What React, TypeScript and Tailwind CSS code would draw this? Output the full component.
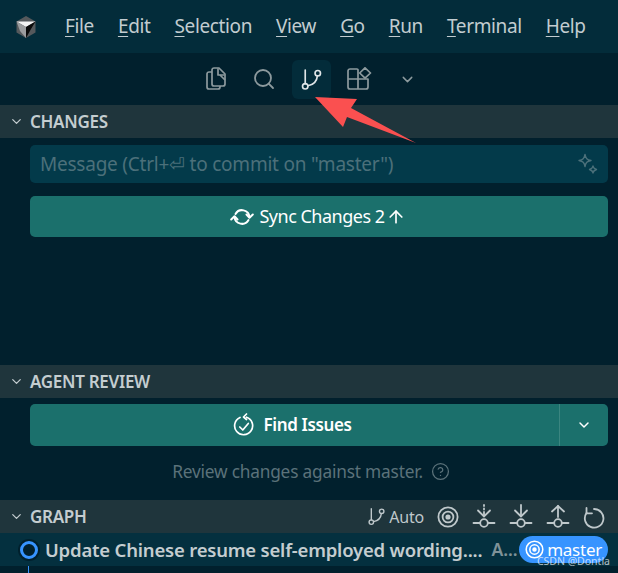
import React from 'react';
import { ChevronDown, Search, ArrowUp, CircleHelp } from 'lucide-react';

function BranchIcon({ size = 22, className = '' }: { size?: number; className?: string }) {
  return (
    <svg width={size} height={size} viewBox="0 0 22 22" fill="none" stroke="currentColor" strokeWidth="1.6" strokeLinecap="round" className={className}>
      <path d="M5 2v13" />
      <circle cx="5" cy="17.500" r="2.600" />
      <circle cx="17" cy="5" r="2.600" />
      <path d="M16.600 7.700c-.5 5-4.300 8.400-9 9.300" />
    </svg>
  );
}

function Target({ size = 22, className = '' }: { size?: number; className?: string }) {
  return (
    <svg width={size} height={size} viewBox="0 0 22 22" fill="none" stroke="currentColor" strokeWidth="1.800" className={className}>
      <circle cx="11" cy="11" r="9.600" />
      <circle cx="11" cy="11" r="5.400" />
      <circle cx="11" cy="11" r="1.700" fill="currentColor" />
    </svg>
  );
}

function Pull({ kind }: { kind: 'fetch' | 'pull' | 'push' }) {
  return (
    <svg width="24" height="26" viewBox="0 0 24 26" fill="none" stroke="currentColor" strokeWidth="1.800" strokeLinecap="round">
      {kind === 'fetch' && <path d="M12 1v1M12 4.500v1M12 8v3" />}
      {kind === 'pull' && <path d="M12 1v11" />}
      {kind === 'push' && <path d="M12 2v11" />}
      {kind === 'push' ? <path d="M6 7.500 12 2l6 5.500" /> : <path d="M6 6.500l6 6 6-6" />}
      <circle cx="12" cy="19" r="3.800" />
      <path d="M1.500 19h6.700M15.800 19h6.700" />
    </svg>
  );
}

function Section({ title, right }: { title: string; right?: React.ReactNode }) {
  return (
    <div className="flex h-[33px] shrink-0 items-center bg-[#1f353c] pl-[9px] pr-[13px] text-[#c4cdd0]">
      <ChevronDown size={15} strokeWidth={2} />
      <span className="ml-[6px] text-[17px] font-semibold tracking-[-0.3px]">{title}</span>
      {right}
    </div>
  );
}

export default function App() {
  const menus = ['File', 'Edit', 'Selection', 'View', 'Go', 'Run', 'Terminal', 'Help'];

  return (
    <div className="relative flex h-[573px] w-[618px] flex-col overflow-hidden bg-[#01202d] font-['Noto_Sans','Open_Sans',sans-serif]">
      {/* title bar */}
      <div className="flex h-[53px] shrink-0 items-center bg-[#032c3a] pl-[16px] text-[19px] text-[#c2ccd0]">
        <svg width="20" height="22" viewBox="0 0 20 22" className="mr-[29px]">
          <path d="M10 0 19.500 5.500V16.500L10 22 .5 16.500V5.500Z" fill="#55595c" />
          <path d="M.5 5.500 19.500 5.500 10 11Z" fill="#f4f4f4" />
          <path d="M19.500 5.500 10 11V22L15 13Z" fill="#0a0a0a" />
          <path d="M.5 5.500 10 11 10 22 4 15Z" fill="#9b9d9f" />
        </svg>
        <div className="flex gap-[24px]">
          {menus.map((m) => (
            <span key={m} className="tracking-[-0.37px]">
              <span className="underline underline-offset-[3px]">{m[0]}</span>
              {m.slice(1)}
            </span>
          ))}
        </div>
      </div>

      {/* activity toolbar */}
      <div className="flex h-[52px] shrink-0 items-center justify-center bg-[#01202d] text-[#8d9a9e]">
        <div className="ml-[5px] flex items-center gap-[9px]">
          <div className="flex h-[39px] w-[39px] items-center justify-center">
            <svg width="20" height="24" viewBox="0 0 20 24" fill="none" stroke="currentColor" strokeWidth="1.700" strokeLinejoin="round">
              <path d="M6 5H3a2 2 0 0 0-2 2v13a2 2 0 0 0 2 2h9a2 2 0 0 0 2-2v-1" />
              <path d="M6 3a2 2 0 0 1 2-2h5l6 6v10a2 2 0 0 1-2 2H8a2 2 0 0 1-2-2Z" />
              <path d="M12 1.500 V8h6.500" />
              <path d="M14 8l5 5" />
            </svg>
          </div>
          <div className="flex h-[39px] w-[39px] items-center justify-center">
            <Search size={24} strokeWidth={1.800} />
          </div>
          <div className="flex h-[39px] w-[39px] items-center justify-center rounded-[6px] bg-[#032c3a] text-[#dfe5e7]">
            <BranchIcon size={23} />
          </div>
          <div className="flex h-[39px] w-[39px] items-center justify-center">
            <svg width="25" height="24" viewBox="0 0 25 24" fill="none" stroke="currentColor" strokeWidth="1.700" strokeLinejoin="round">
              <path d="M11 12V3a1 1 0 0 0-1-1H3a2 2 0 0 0-2 2v16a2 2 0 0 0 2 2h16a2 2 0 0 0 2-2v-8Z" />
              <path d="M11 12v10M1 12h10" />
              <path d="M18 .8 23.500 6 18 11.200 12.700 6Z" />
            </svg>
          </div>
          <div className="flex h-[39px] w-[39px] items-center justify-center">
            <ChevronDown size={17} strokeWidth={2} />
          </div>
        </div>
      </div>

      <Section title="CHANGES" />

      <div className="flex h-[227px] shrink-0 flex-col gap-[13px] pl-[30px] pr-[10px] pt-[7px]">
        <div className="flex h-[38px] items-center justify-between rounded-[5px] bg-[#033a4a] pl-[10px] pr-[9px] text-[19px] text-[#4c707a]">
          <span className="tracking-[-0.23px]">Message (Ctrl+⏎ to commit on "master")</span>
          <svg width="24" height="24" viewBox="0 0 24 24" fill="none" stroke="currentColor" strokeWidth="1.400" strokeLinejoin="round">
            <path d="M10 2.500c.8 4 2 5.200 6 6-4 .8-5.200 2-6 6-.8-4-2-5.200-6-6 4-.8 5.200-2 6-6Z" />
            <path d="M18 14c.3 2 1 2.700 3.500 3.500-2.500.8-3.200 1.500-3.500 3.500-.3-2-1-2.700-3.500-3.500 2.500-.8 3.200-1.500 3.500-3.500Z" />
          </svg>
        </div>
        <div className="flex h-[41px] items-center justify-center gap-[5px] rounded-[5px] bg-[#1b706c] pr-[2px] text-[18px] text-white">
          <svg width="24" height="24" viewBox="0 0 24 24" fill="none" stroke="currentColor" strokeWidth="2" strokeLinecap="round" strokeLinejoin="round">
            <path d="M5.500 9a7.500 7.500 0 0 1 14 3" />
            <path d="M16.500 9.500l3 3.200 3.300-3.200" />
            <path d="M18.500 15a7.500 7.500 0 0 1-14-3" />
            <path d="M1.200 14.500l3.300-3.200 3 3.200" />
          </svg>
          <span className="tracking-[-0.5px]">Sync Changes 2</span>
          <ArrowUp size={20} strokeWidth={2} className="ml-[-4px]" />
        </div>
      </div>

      <Section title="AGENT REVIEW" />

      <div className="flex h-[102px] shrink-0 flex-col items-stretch pl-[30px] pr-[10px] pt-[6px]">
        <div className="flex h-[42px] shrink-0 rounded-[5px] bg-[#1b706c] text-white">
          <div className="flex flex-1 items-center justify-center gap-[8px] border-r border-[#3b8580] text-[17px] font-semibold">
            <svg width="22" height="24" viewBox="0 0 22 24" fill="none" stroke="currentColor" strokeWidth="1.700" strokeLinecap="round" strokeLinejoin="round">
              <path d="M7 4.500a9 9 0 1 0 6.500-.3" />
              <path d="M13.500 1 10.500 4l3 2.500" />
              <path d="M6.800 14l3 3 5.500-6.500" />
            </svg>
            <span className="mr-[4px] tracking-[-0.35px]">Find Issues</span>
          </div>
          <div className="flex w-[48px] items-center justify-center">
            <ChevronDown size={16} strokeWidth={2.200} />
          </div>
        </div>
        <div className="mt-[13px] flex items-center justify-center gap-[8px] pr-[16px] text-[17.300px] text-[#5b727a]">
          <span className="tracking-[-0.2px]">Review changes against master.</span>
          <CircleHelp size={19} strokeWidth={1.600} />
        </div>
      </div>

      <Section
        title="GRAPH"
        right={
          <div className="ml-auto flex items-center gap-[13px] text-[#bfc8cb]">
            <div className="flex items-center gap-[3px]">
              <BranchIcon size={19} />
              <span className="text-[16px] tracking-[-0.2px]">Auto</span>
            </div>
            <Target />
            <Pull kind="fetch" />
            <Pull kind="pull" />
            <Pull kind="push" />
            <svg width="22" height="24" viewBox="0 0 22 24" fill="none" stroke="currentColor" strokeWidth="1.800" strokeLinecap="round" strokeLinejoin="round">
              <path d="M11 4a9.300 9.300 0 1 1-7.500 4" />
              <path d="M3.500 3v5.300H9" />
            </svg>
          </div>
        }
      />

      {/* selected commit */}
      <div className="flex h-[33px] shrink-0 items-center bg-[#04303f] pl-[20px] pr-[10px] text-[18.500px]">
        <div className="h-[18px] w-[18px] shrink-0 rounded-full border-[3px] border-[#3794ff] bg-[#01202d] shadow-[0_0_0_2px_#01202d]" />
        <span className="ml-[7px] whitespace-nowrap font-semibold tracking-[-0.2px] text-[#c4cdd0]">
          Update Chinese resume self-employed wording....
        </span>
        <span className="ml-[9px] whitespace-nowrap text-[17.500px] font-semibold text-[#7f9298]">A...</span>
        <div className="ml-auto flex h-[27px] shrink-0 items-center gap-[3px] rounded-full bg-[#3794ff] pl-[6px] pr-[6px] text-white">
          <Target size={19} />
          <span className="text-[17px] tracking-[-0.25px]">master</span>
        </div>
      </div>
      <div className="ml-[28px] h-[7px] w-[1px] shrink-0 bg-[#3794ff]" />

      {/* annotation arrow */}
      <svg className="absolute left-0 top-0" width="618" height="573" viewBox="0 0 618 573">
        <path d="M315 97 357 99 351 108 416 143 347 117 343 127Z" fill="#fa5050" />
      </svg>

      {/* watermark */}
      <span className="absolute right-[8px] top-[556px] text-[10.500px] leading-none text-white/70">CSDN @Dontla</span>
    </div>
  );
}
